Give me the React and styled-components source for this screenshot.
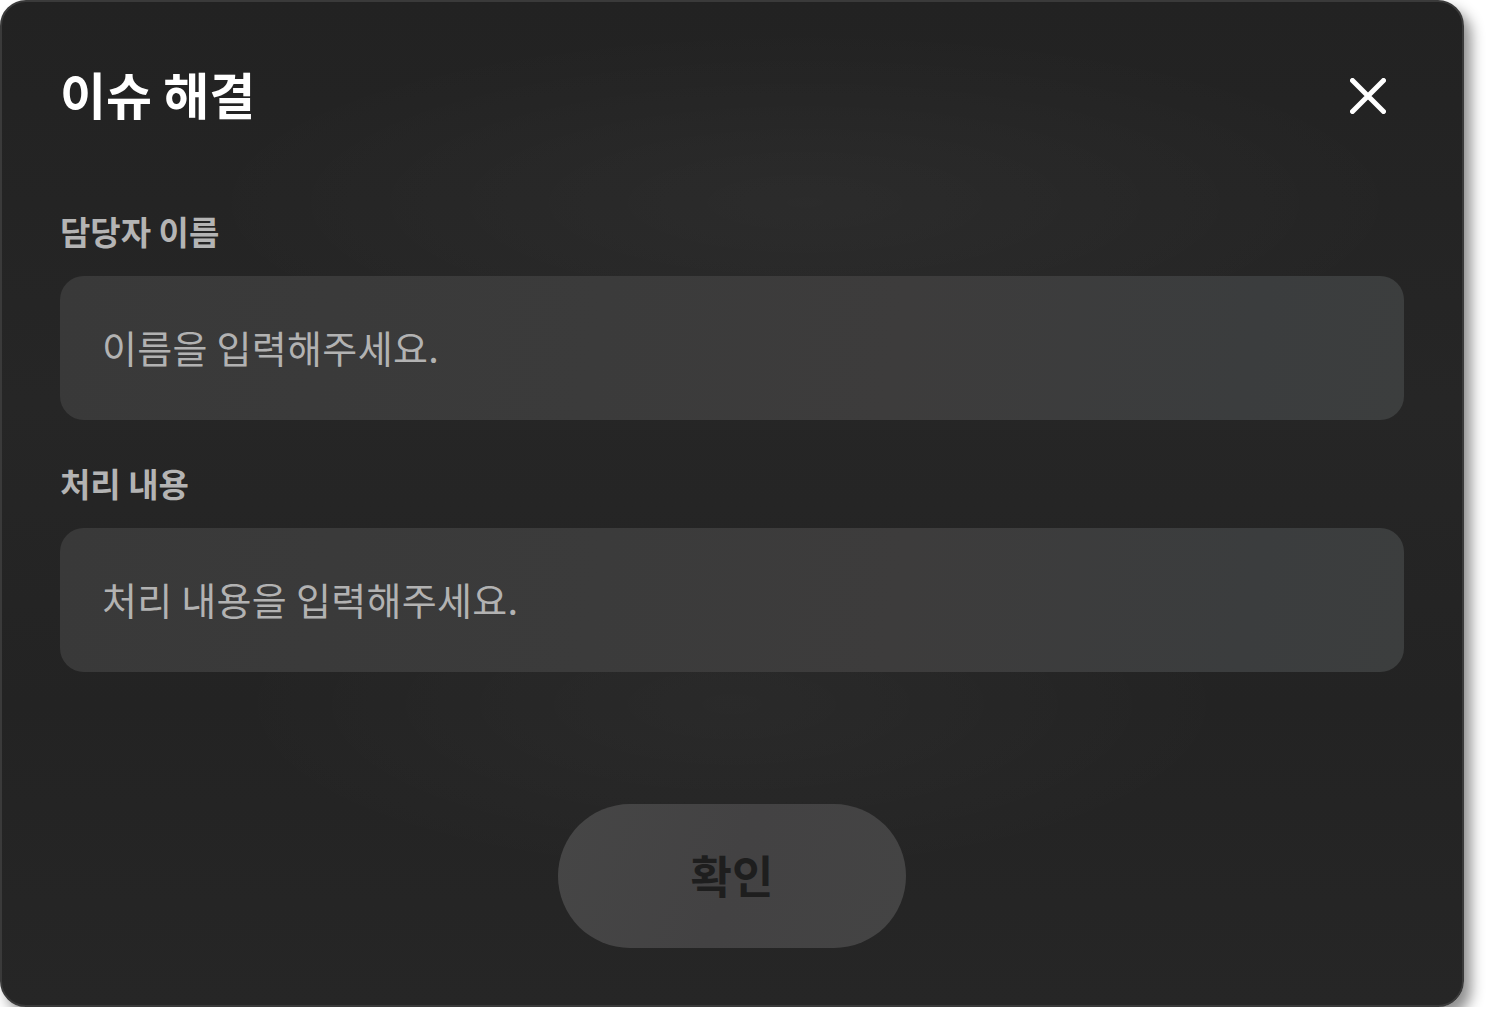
import React from 'react';
import styled, { createGlobalStyle } from 'styled-components';

const GlobalStyle = createGlobalStyle`
  html, body {
    margin: 0;
    padding: 0;
    background: #ffffff;
  }
  * {
    box-sizing: border-box;
  }
`;

const FONT = `"Noto Sans CJK KR", "Noto Sans", sans-serif`;

const Dialog = styled.div`
  width: 1464px;
  height: 1007px;
  border: 2px solid #3a3a3a;
  border-radius: 26px;
  padding: 58px 58px 0;
  font-family: ${FONT};
  background:
    radial-gradient(ellipse 60% 25% at 55% 20%, rgba(255, 255, 255, 0.035), transparent 70%),
    radial-gradient(ellipse 50% 25% at 50% 70%, rgba(255, 255, 255, 0.03), transparent 70%),
    linear-gradient(180deg, #222222 0%, #262626 40%, #232323 70%, #262626 100%);
  box-shadow: 7px 9px 14px rgba(0, 0, 0, 0.45);
  display: flex;
  flex-direction: column;
`;

const Header = styled.div`
  height: 72px;
  display: flex;
  align-items: center;
  justify-content: space-between;
  margin-bottom: 80px;
`;

const Title = styled.h1`
  margin: 0 0 6px;
  line-height: 1.2;
  font-size: 50px;
  font-weight: 700;
  color: #ffffff;
`;

const CloseButton = styled.button`
  width: 72px;
  height: 72px;
  border: none;
  background: none;
  padding: 0;
  display: flex;
  align-items: center;
  justify-content: center;
  cursor: pointer;
`;

const Field = styled.div`
  display: flex;
  flex-direction: column;
  gap: 24px;
  margin-bottom: ${p => p.$gap}px;
`;

const Label = styled.label`
  height: 40px;
  line-height: 38px;
  font-size: 33px;
  font-weight: 700;
  color: #b4b4b4;
`;

const Input = styled.input`
  width: 100%;
  height: 144px;
  border: none;
  outline: none;
  border-radius: 24px;
  padding: 0 42px 4px;
  font-family: ${FONT};
  font-size: 38px;
  font-weight: 400;
  letter-spacing: 0.3px;
  color: #e0e0e0;
  background: linear-gradient(100deg, #393939 0%, #3b3b3b 40%, #3d3c3c 62%, #3b3d3e 88%, #3c3e3e 100%);

  &::placeholder {
    color: #b2b2b2;
  }
`;

const Footer = styled.div`
  display: flex;
  justify-content: center;
`;

const ConfirmButton = styled.button`
  width: 348px;
  height: 144px;
  border: none;
  border-radius: 72px;
  padding: 0 0 4px;
  background: linear-gradient(110deg, #464646 0%, #434243 50%, #444444 100%);
  font-family: ${FONT};
  font-size: 45px;
  font-weight: 700;
  color: #1e1e1e;
  cursor: pointer;
`;

const CloseIcon = () => (
  <svg width="36" height="36" viewBox="0 0 36 36" fill="none">
    <path d="M2.5 2.5 L33.5 33.5 M33.5 2.5 L2.5 33.5" stroke="#ffffff" strokeWidth="5" strokeLinecap="round" />
  </svg>
);

export default function App() {
  return (
    <>
      <GlobalStyle />
      <Dialog>
        <Header>
          <Title>이슈 해결</Title>
          <CloseButton aria-label="닫기">
            <CloseIcon />
          </CloseButton>
        </Header>

        <Field $gap={44}>
          <Label>담당자 이름</Label>
          <Input placeholder="이름을 입력해주세요." />
        </Field>

        <Field $gap={132}>
          <Label>처리 내용</Label>
          <Input placeholder="처리 내용을 입력해주세요." />
        </Field>

        <Footer>
          <ConfirmButton>확인</ConfirmButton>
        </Footer>
      </Dialog>
    </>
  );
}
